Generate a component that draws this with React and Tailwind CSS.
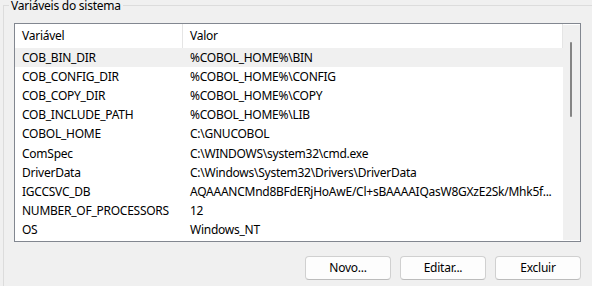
import React from 'react';

const rows = [
  ['COB_BIN_DIR', '%COBOL_HOME%\\BIN'],
  ['COB_CONFIG_DIR', '%COBOL_HOME%\\CONFIG'],
  ['COB_COPY_DIR', '%COBOL_HOME%\\COPY'],
  ['COB_INCLUDE_PATH', '%COBOL_HOME%\\LIB'],
  ['COBOL_HOME', 'C:\\GNUCOBOL'],
  ['ComSpec', 'C:\\WINDOWS\\system32\\cmd.exe'],
  ['DriverData', 'C:\\Windows\\System32\\Drivers\\DriverData'],
  ['IGCCSVC_DB', 'AQAAANCMnd8BFdERjHoAwE/Cl+sBAAAAIQasW8GXzE2Sk/Mhk5f...'],
  ['NUMBER_OF_PROCESSORS', '12'],
  ['OS', 'Windows_NT'],
];

// Windows style push button
const Button = ({ label }) => (
  <button className="w-[86px] h-[24px] rounded-[4px] border border-[#d0d0d0] border-b-[#bcbcbc] bg-[#fdfdfd] text-[12px] text-black">
    {label}
  </button>
);

const App = () => {
  return (
    <div
      className="w-[592px] h-[286px] overflow-hidden bg-[#f0f0f0] text-[12px] tracking-[-0.25px] text-black"
      style={{ fontFamily: '"Noto Sans", sans-serif' }}
    >
      {/* group box */}
      <div className="relative ml-[3px] mt-[5px] h-[300px] border-l border-t border-[#dcdcdc] pl-[10px] pt-[17px]">
        <span className="absolute -top-[7px] left-[5px] bg-[#f0f0f0] px-[2px] leading-[14px]">
          Variáveis do sistema
        </span>

        {/* list view */}
        <div className="flex w-[567px] h-[219px] border border-[#828790] bg-white">
          <div className="flex-1 flex flex-col">
            <div className="flex h-[24px] items-center border-r border-[#e5e5e5] leading-none">
              <div className="w-[168px] h-full flex items-center pl-[7px] border-r border-[#e5e5e5]">Variável</div>
              <div className="flex-1 pl-[7px]">Valor</div>
            </div>
            {rows.map(([name, value], i) => (
              <div
                key={name}
                className={`flex h-[19.2px] items-center leading-none whitespace-nowrap ${i === 0 ? 'bg-[#f0f0f0]' : ''}`}
              >
                <div className="w-[168px] pl-[7px]">{name}</div>
                <div className="flex-1 pl-[7px]">{value}</div>
              </div>
            ))}
          </div>

          {/* scrollbar */}
          <div className="w-[17px] mt-[1px] mb-[1px] bg-[#f0f0f0] pl-[7px] pt-[17px]">
            <div className="w-[2px] h-[75px] rounded-full bg-[#858585]" />
          </div>
        </div>

        <div className="flex justify-end gap-[9px] mt-[14px] w-[567px]">
          <Button label="Novo..." />
          <Button label="Editar..." />
          <Button label="Excluir" />
        </div>
      </div>
    </div>
  );
};

export default App;
